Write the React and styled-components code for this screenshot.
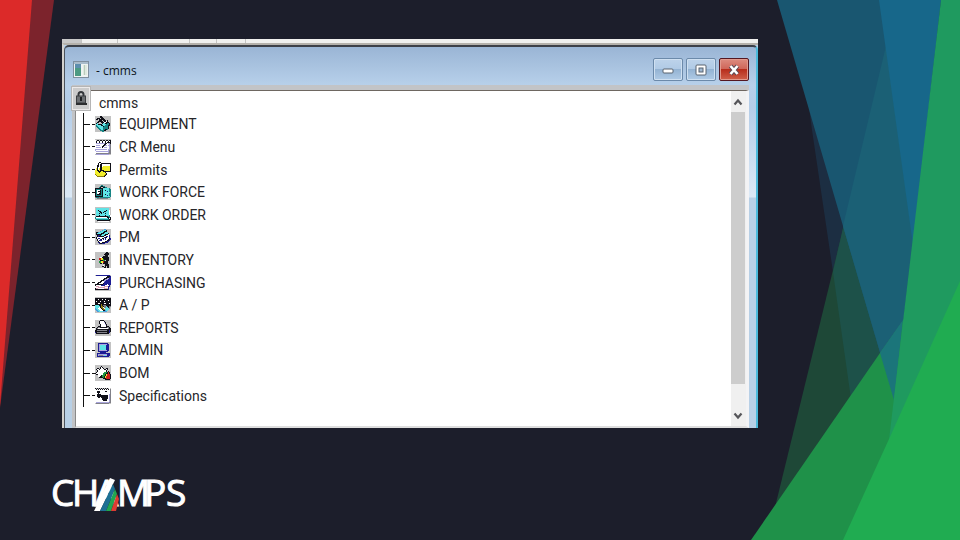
import React, { useState } from 'react';
import styled, { createGlobalStyle } from 'styled-components';

const GlobalStyle = createGlobalStyle`
  * {
    box-sizing: border-box;
  }
  body {
    margin: 0;
    background: #1c1e2b;
  }
  button {
    padding: 0;
    border: 0;
    background: none;
    font: inherit;
    color: inherit;
    cursor: pointer;
  }
`;

const Slide = styled.div`
  position: relative;
  min-height: 100vh;
  display: flex;
  flex-direction: column;
  overflow: hidden;
  background: #1c1e2b;
`;

const Backdrop = styled.svg`
  position: absolute;
  top: 0;
  left: 0;
  width: 100%;
  height: 100%;
`;

const Content = styled.main`
  position: relative;
  padding: 39px 202px 0 62px;
`;

const Footer = styled.footer`
  position: relative;
  padding: 36px 50px 0;
`;

const ToolStrip = styled.div`
  display: flex;
  height: 4px;
  background: #f0f0ee;
`;

const StripCell = styled.span`
  width: ${({ $width }) => $width}px;
  border-right: 1px solid #c4c4c2;
  background: ${({ $filled }) => ($filled ? '#c8c8c8' : 'transparent')};
`;

const Frame = styled.section`
  display: flex;
  flex-direction: column;
  border-top: 2px solid #b4b1ab;
  border-left: 2px solid #d4d2ce;
  background: #b9d1ea;
`;

const FrameInner = styled.div`
  border-top: 2px solid #3c4048;
  border-left: 1px solid #4c535c;
  border-right: 2px solid #4bb9da;
  border-radius: 5px 5px 0 0;
  padding: 0 7px;
  background: linear-gradient(
    #9ab5d5 0,
    #b7d0ea 38px,
    #b4cde8 60px,
    #dce9f6 150px,
    #b8d0e6 151px,
    #b8d0e6 100%
  );
`;

const TitleBar = styled.header`
  display: flex;
  align-items: center;
  gap: 7px;
  height: 38px;
  padding: 7px 0 0 1px;
`;

const Title = styled.h1`
  flex: 1;
  margin: 0;
  padding-top: 3px;
  font: 400 12px/16px 'Open Sans', 'Noto Sans', sans-serif;
  color: #0c1420;
`;

const Controls = styled.div`
  display: flex;
  gap: 3px;
  align-self: flex-start;
  padding-top: 4px;
`;

const ControlButton = styled.button`
  display: grid;
  place-items: center;
  width: 30px;
  height: 23px;
  border: 1px solid ${({ $danger }) => ($danger ? '#541721' : '#6c8aaa')};
  border-radius: 2px;
  box-shadow: inset 0 0 0 1px ${({ $danger }) => ($danger ? '#e19a8e' : '#cfe0f1')};
  background: ${({ $danger }) =>
    $danger
      ? 'linear-gradient(#dc8c80 0, #cf6558 48%, #b72d1c 50%, #d0614b 100%)'
      : 'linear-gradient(#bdd3ea 0, #b0cae5 48%, #94b3d3 50%, #b0cbe6 100%)'};
`;

const Panel = styled.div`
  position: relative;
  display: flex;
  border: solid #c2c4c7;
  border-width: 5px 0 0 3px;
`;

const Body = styled.div`
  flex: 1;
  display: flex;
  border-top: 1px solid #6e6761;
  border-left: 1px solid #8a8a8a;
  border-right: 3px solid #f3f3f5;
  border-bottom: 2px solid #dedede;
  background: #fff;
`;

const Tree = styled.div`
  flex: 1;
  padding: 2px 0 19px;
  font: 400 14px/20px Roboto, 'Liberation Sans', sans-serif;
  color: #26262a;
`;

const RootLabel = styled.div`
  padding-left: 23px;
`;

const RootTile = styled.div`
  position: absolute;
  top: -4px;
  left: -4px;
  display: grid;
  place-items: center;
  width: 20px;
  height: 25px;
  border: 2px solid #eceaea;
  outline: 1px solid #b5b5b5;
  outline-offset: -1px;
  background: #cbcbcb;
`;

const Items = styled.ul`
  display: grid;
  grid-auto-rows: 1fr;
  min-height: 294px;
  margin: 0 0 0 7px;
  padding: 0;
  list-style: none;
  border-left: 1px solid #111;
`;

const Item = styled.li`
  display: flex;
  align-items: center;
`;

const Connector = styled.span`
  width: 11px;
  height: 1px;
  background: linear-gradient(90deg, #111 0 6px, transparent 6px 8px, #111 8px);
`;

const ItemButton = styled.button`
  display: flex;
  align-items: center;
  gap: 8px;
`;

const ScrollBar = styled.div`
  display: flex;
  flex-direction: column;
  width: 15px;
  padding-right: 1px;
  background: #f0f0f0;
`;

const ScrollButton = styled.button`
  display: grid;
  place-items: center;
  height: 21px;
`;

const ScrollTrack = styled.div`
  flex: 1;
  padding-bottom: 21px;
`;

const ScrollThumb = styled.div`
  height: 100%;
  background: #cdcdcd;
`;

const palette = {
  k: '#101018',
  w: '#ffffff',
  c: '#5fe3e6',
  t: '#168484',
  b: '#1c1c94',
  l: '#a9a4dc',
  y: '#f2ee2a',
  o: '#8a7d10',
  r: '#cf1f1f',
  g: '#1d9440',
  d: '#808088',
  p: '#dba0b4',
  s: '#4a9fdf',
};

// 16x16 sprites, one character per pixel, "." lets the tile show through
const sprites = {
  equipment: [
    '.....kk.........',
    '.....kkk........',
    '..kkk.kkk.......',
    '.kk.kkkkkk......',
    '....kkk.kkk.k...',
    '...kkkkk.kkwk...',
    '..kk..kkkwwkkk..',
    '.kc....kcckkttk.',
    '.cckkkkcccctttk.',
    '.tcccckkcctttkk.',
    '.ttccccckttttk..',
    '..ttcccctttttk..',
    '...ttccctttttk..',
    '....ttccttkkt...',
    '.....ttttkk.....',
    '.......tt.......',
  ],
  request: [
    '................',
    'w.kk.kk.kk.kk.kk',
    'wkwwkwwkwwkwwkwk',
    'wkwwkwwkwwkwkkkk',
    'wlllllllllkkwllk',
    'wwwwwwwwwkkwwwld',
    'wllllwwwkkllwlld',
    'wwwwwwwkkwwwwwld',
    'wlllllwkwlllwwld',
    'wwwwwwwwwwwwwwld',
    'llllllllllllwlld',
    'lwwwwwwwwwwwwldd',
    'wllllllllllllldd',
    'wwwwwwwwwwwwwldd',
    'wddddddddddddddd',
    '.lllllllllllll..',
  ],
  permits: [
    '....kk..........',
    '...kwwkkkkkkkkkk',
    '...kwkkwwwwwwwwk',
    '..kkwkkwwwwwwwwk',
    '..kkwkkwyyyyyyyk',
    '..kwwkkyyyyyyyyk',
    '.ykwykkyyyyyyyyk',
    '.ykwykkyyyyyyyyk',
    'yykkykkkkyyyyyyk',
    'yyykkkyykkkkkkkk',
    'yyyykyyyyyk.....',
    'yyyyyyyyyyyk....',
    'oyyyyyyyyyok....',
    '.oyyyyyyyok.....',
    '..oooooook......',
    '................',
  ],
  force: [
    '................',
    '......tt........',
    '.....tkktt......',
    '....tk..kktt....',
    'kkkkkkkkcccccct.',
    'kttttttkcccccctt',
    'ktwwwktkcckccctt',
    'ktwkkktkccccbctt',
    'ktwwwktkccccccct',
    'ktwwkktkcccccctt',
    'ktkkkktkcckccctt',
    'kttttttkccccbctt',
    'kkkkkkkkccccccct',
    'dtttdtttttttttt.',
    '..ddddddddddd...',
    '................',
  ],
  order: [
    '................',
    '.ccccccccccccc..',
    '.ccccccccccccc..',
    '.cckccccccckccw.',
    '.ccckkccckkcccw.',
    '.cccckkckcccccw.',
    '.ccckckccckcccw.',
    '.cccccccccccccw.',
    '.ccckccccckccctw',
    '.kkkkkkkkkkkkttw',
    'twwwwwwwwwwwkktk',
    'tcccccccccccckwk',
    '.tttttttttttttkk',
    '..kkkkkkkkkkkkk.',
    '...wwwwwwwwwww..',
    '................',
  ],
  pm: [
    '.........ss.....',
    '.......sccck....',
    '.....sccckkk....',
    '.kkscccckkccc...',
    '.kcccckkkcccck..',
    '.kkkkkkccckkkw..',
    '..kbbkccckkwwwb.',
    '..kbkkkkkwwbbwb.',
    '.kwwwwwwwbkkwwb.',
    '.kwbbwwkkwbwwwkb',
    '..kwwbkwbwbwwkbb',
    '..kwbbbwwwwwkkb.',
    '...kwwwwwwkkbb..',
    '...bkwwkkkbbb...',
    '....bkkbbb......',
    '................',
  ],
  inventory: [
    '...........kk...',
    '..........kkkk..',
    '.........kkkkk..',
    '..........kkk...',
    '........kkkkk...',
    '.....wwkkkkkkk..',
    '....rryykkkkkk..',
    '....rryygkkkkk..',
    '.....kkkgg.kkk..',
    '....ggyyrkkkk...',
    '....ggyyrkkkk...',
    '.....kk.kkkkk...',
    '..........kkkk..',
    '........w.kkkk..',
    '.......kk.k.kk..',
    '.........kk.kk..',
  ],
  purchasing: [
    '.bbbbbbbbbbbbbb.',
    'wwwwwwwwwwwwkkkb',
    'wwwwwwwwwwwkkkbb',
    'wwwwwwwwwkkkllbb',
    'wwwwwwwwkklllbbb',
    'wwwwwwkkkllbbbbb',
    'wwwwwkkwwlbbbbbb',
    'wwwkkkwwwbbbbbbb',
    'wwkkwwwwkbbbbbbb',
    'kkkkkkkkbbbbwbbb',
    'kwwwwwbbbbwwwwb.',
    'wpppwwwwwppppbb.',
    'wwwpppppppwwwb..',
    'kppwwwwwwppppb..',
    'kkkkkkkkkkkkkb..',
    '................',
  ],
  payable: [
    '................',
    'kkkkkkkkkkkkkkkk',
    'kkkwkkkwkkwkkkkk',
    'kkkkkkkkkkkkkwkk',
    'kwkkkwkkkwkkkkkk',
    'kkkkkkkkkkkkkkkk',
    'kkkwwkkkkwwkkkwk',
    'kkkkkkokkkkkkkkk',
    'cccckkokdddkkkkk',
    'ccccckookddckkdd',
    'ccccwkoowddcckd.',
    'sccwwwkoowccccd.',
    'ssccwwwkoocccc..',
    '.ssccwwwkkscc...',
    '..ssccccssss....',
    '................',
  ],
  reports: [
    '.....kkkk.......',
    '....kwwwwk......',
    '....kwwwwlk.....',
    '....kwwwwwk.....',
    '.....kwwwwlk....',
    '.....kwwwwwk....',
    '...kkkwwwwwkkk..',
    '..kddkkkkkkkddk.',
    '.kdwwwwwwwwwwdkk',
    '.kkkkkkkkkkkkkkk',
    'kkddddddddddkkbk',
    'kkkkkkkkkkkkkkbk',
    'bkddddddddddkkb.',
    '.kkkkkkkkkkkkk..',
    '................',
    '................',
  ],
  admin: [
    '................',
    '...bbbbbbbbbb...',
    '...bllllllllbb..',
    '...blccccccbbb..',
    '...blccccccbbb..',
    '...blccccccbbb..',
    '...blccccccbbb..',
    '...blccccccbbb..',
    '...bllllllllbb..',
    '...bbbbbbbbbb...',
    '.....bbbbbb.....',
    '..bbbbbbbbbbbbb.',
    '..blllllllllbbb.',
    '..blddddlcclbbb.',
    '..bbbbbbbbbbbb..',
    '................',
  ],
  bom: [
    '................',
    '......k.........',
    '.....kwk........',
    '..kk.kwwk..kk...',
    '.kwwkwwwwkkwk...',
    '..kwwwwwwwwk....',
    '..kwwwwwwwwk.k..',
    '.kwwwwwwwgggkrk.',
    'kwwwwwwwgggkkrk.',
    '.kkwwwwwggkyrrrk',
    '...wwwkgggkyrrrk',
    '...wwkkggkyrrrrk',
    '....kkkkgkyrrrrk',
    '........kkkrrrrk',
    '..........kkkkk.',
    '................',
  ],
  specs: [
    'k.k.k.k.k.k.k.w.',
    'wkwkwkwkwkwkwkwd',
    'wwwwwwwwwwwwwwwd',
    'wwkkkwwwwwkkwwwd',
    'wwkkkwwwwwwwwwwd',
    'wwwkwwwwwwwwwwwd',
    'wwkkkkwwwwwwwwld',
    'wwkkkkkkkkkkkwld',
    'wwkkkkkkkkkkkwld',
    'wwwkkwkkkkkkkwld',
    'wwwwwwwkkkkkkwld',
    'wwwwwwwkkkkkwwld',
    'wwwwwwwwkkkkwwld',
    'wwwwwwwwwwwwwwld',
    'wllllllllllllldd',
    '.ddddddddddddd..',
  ],
};

const menu = [
  { icon: 'equipment', label: 'EQUIPMENT' },
  { icon: 'request', label: 'CR Menu' },
  { icon: 'permits', label: 'Permits' },
  { icon: 'force', label: 'WORK FORCE' },
  { icon: 'order', label: 'WORK ORDER' },
  { icon: 'pm', label: 'PM' },
  { icon: 'inventory', label: 'INVENTORY' },
  { icon: 'purchasing', label: 'PURCHASING' },
  { icon: 'payable', label: 'A / P' },
  { icon: 'reports', label: 'REPORTS' },
  { icon: 'admin', label: 'ADMIN' },
  { icon: 'bom', label: 'BOM' },
  { icon: 'specs', label: 'Specifications' },
];

const Sprite = ({ name }) => (
  <svg width="16" height="16" viewBox="0 0 16 16" shapeRendering="crispEdges" aria-hidden="true">
    <rect width="16" height="16" fill={name === 'permits' ? '#ffffff' : '#c3c3c3'} />
    {sprites[name].map((line, y) =>
      line.split('').map((ch, x) =>
        palette[ch] ? (
          <rect key={`${x}-${y}`} x={x} y={y} width="1" height="1" fill={palette[ch]} />
        ) : null
      )
    )}
  </svg>
);

const AppIcon = () => (
  <svg width="16" height="17" viewBox="0 0 16 17" aria-hidden="true">
    <rect x=".5" y=".5" width="15" height="16" fill="#eef3f2" stroke="#7f8f9f" />
    <rect x="1" y="1" width="14" height="2" fill="#a9bccb" />
    <rect x="2" y="3" width="6" height="12" fill="#4c9a83" />
    <rect x="2" y="3" width="6" height="4" fill="#5d8fae" />
    <rect x="10" y="4" width="4" height="10" fill="#dfeadf" />
    <rect x="11" y="4" width="1" height="10" fill="#b9cbbd" />
  </svg>
);

const LockIcon = () => (
  <svg width="12" height="15" viewBox="0 0 12 15" aria-hidden="true">
    <path d="M3.5 6V3.5a2.5 2.5 0 0 1 5 0V6" fill="none" stroke="#33363a" strokeWidth="2" />
    <rect x="1.5" y="5" width="9" height="7" fill="#6d7073" stroke="#3b3d40" />
    <rect x="5" y="6" width="2" height="4" fill="#1d1f21" />
    <rect x="1" y="12" width="11" height="2" fill="#2c2d2f" />
  </svg>
);

const Arrow = ({ down }) => (
  <svg width="10" height="8" viewBox="0 0 10 8" aria-hidden="true">
    <path
      d={down ? 'M1.5 1.5 5 5.5l3.5-4' : 'M1.5 6.5 5 2.5l3.5 4'}
      fill="none"
      stroke="#56565a"
      strokeWidth="2.2"
    />
  </svg>
);

const Shapes = () => (
  <Backdrop viewBox="0 0 960 540" preserveAspectRatio="none" aria-hidden="true">
    <polygon points="0,0 54,0 0,408" fill="#7c232c" />
    <polygon points="0,0 32,0 0,406" fill="#dc2a29" />
    <polygon points="795,0 812,130 833,272 871,540 960,540 960,0" fill="#1c2e42" />
    <polygon points="888,45 767,540 960,540" fill="#1e4837" />
    <polygon points="843,228 833,272 871,540 960,540 888,45" fill="#1d5149" />
    <polygon points="777,0 843,226 894,400 941,0" fill="#195670" />
    <polygon points="886,46 843,226 894,400 913,240" fill="#1b6075" />
    <polygon points="879,0 913,245 941,0" fill="#17678a" />
    <polygon points="751,540 880,353 960,240 960,540" fill="#1f9149" />
    <polygon points="880,353 903,320 894,400" fill="#1b757a" />
    <polygon points="941,0 889,440 960,290 960,0" fill="#1f9a5f" />
    <polygon points="843,540 889,439 960,281 960,540" fill="#20ac51" />
  </Backdrop>
);

const Logo = () => (
  <svg width="144" height="54" viewBox="0 0 144 54" role="img" aria-label="CHAMPS">
    <text
      x="1 22 45 67 94 116"
      y="42"
      fontFamily="'Open Sans', 'Noto Sans', sans-serif"
      fontSize="37"
      fill="#fff"
      stroke="#fff"
      strokeWidth="1"
    >
      CHAMPS
    </text>
    <polygon points="44,47 60,14 65,16 50,47" fill="#fff" />
    <polygon points="50,47 63,20 65,25 56,47" fill="#1d7095" />
    <polygon points="56,47 65,25 67,30 61,47" fill="#20a651" />
    <polygon points="61,47 67,30 69,35 66,47" fill="#dc3b32" />
  </svg>
);

const App = () => {
  const [selected, setSelected] = useState(null);

  return (
    <>
      <GlobalStyle />
      <Slide>
        <Shapes />
        <Content>
          <ToolStrip>
            <StripCell $width={20} $filled />
            <StripCell $width={36} />
            <StripCell $width={72} />
            <StripCell $width={27} />
            <StripCell $width={29} />
          </ToolStrip>
          <Frame>
            <FrameInner>
              <TitleBar>
                <AppIcon />
                <Title>- cmms</Title>
                <Controls>
                  <ControlButton aria-label="Minimize">
                    <svg width="12" height="8" viewBox="0 0 12 8">
                      <rect x="1" y="3" width="10" height="4" rx="1" fill="#fff" stroke="#59636f" />
                    </svg>
                  </ControlButton>
                  <ControlButton aria-label="Restore">
                    <svg width="12" height="12" viewBox="0 0 12 12">
                      <rect x="1" y="1" width="10" height="10" rx="1" fill="#fff" stroke="#59636f" />
                      <rect x="4" y="4" width="4" height="4" fill="#9fb8d2" stroke="#59636f" />
                    </svg>
                  </ControlButton>
                  <ControlButton $danger aria-label="Close">
                    <svg width="12" height="12" viewBox="0 0 12 12">
                      <path d="M2.5 2l7 8M9.5 2l-7 8" stroke="#5a4a55" strokeWidth="4.4" />
                      <path d="M2.5 2l7 8M9.5 2l-7 8" stroke="#fff" strokeWidth="2.6" />
                    </svg>
                  </ControlButton>
                </Controls>
              </TitleBar>
              <Panel>
                <Body>
                  <Tree>
                    <RootLabel>cmms</RootLabel>
                    <Items>
                      {menu.map(({ icon, label }) => (
                        <Item key={icon}>
                          <Connector />
                          <ItemButton
                            aria-pressed={selected === icon}
                            onClick={() => setSelected(icon)}
                          >
                            <Sprite name={icon} />
                            {label}
                          </ItemButton>
                        </Item>
                      ))}
                    </Items>
                  </Tree>
                  <ScrollBar>
                    <ScrollButton aria-label="Scroll up">
                      <Arrow />
                    </ScrollButton>
                    <ScrollTrack>
                      <ScrollThumb />
                    </ScrollTrack>
                    <ScrollButton aria-label="Scroll down">
                      <Arrow down />
                    </ScrollButton>
                  </ScrollBar>
                </Body>
                <RootTile>
                  <LockIcon />
                </RootTile>
              </Panel>
            </FrameInner>
          </Frame>
        </Content>
        <Footer>
          <Logo />
        </Footer>
      </Slide>
    </>
  );
};

export default App;
